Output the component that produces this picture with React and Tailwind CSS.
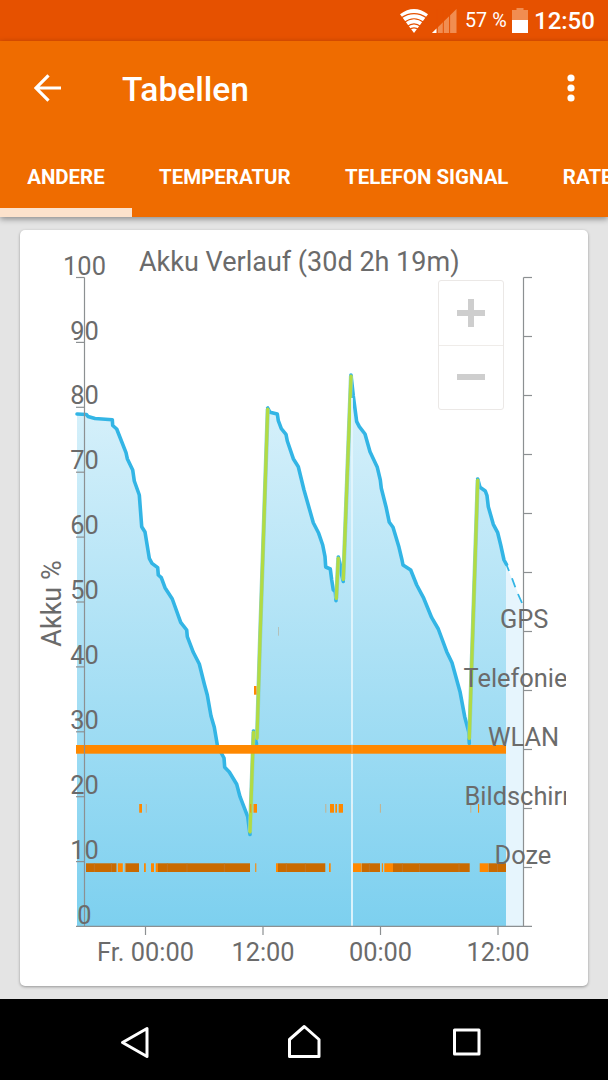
const tabs = ["ANDERE", "TEMPERATUR", "TELEFON SIGNAL", "RATE"];

const percentTicks = [0, 10, 20, 30, 40, 50, 60, 70, 80, 90, 100];
const rightTicks = [0, 1, 2, 3, 4, 5, 6, 7, 8, 9, 10, 11];

const timeTicks = [
  { label: "Fr. 00:00", x: 145.5 },
  { label: "12:00", x: 263 },
  { label: "00:00", x: 380.5 },
  { label: "12:00", x: 498 },
];

const rowLabels = [
  { label: "GPS", x: 500, y: 628 },
  { label: "Telefonie", x: 463.5, y: 687 },
  { label: "WLAN", x: 488, y: 746 },
  { label: "Bildschirm", x: 464.5, y: 805 },
  { label: "Doze", x: 494.5, y: 864 },
];

// battery level, split where the phone was plugged in
const discharge = [
  "77,414 86.5,414.5 88,416.5 95,418.5 112.3,419.7 112.7,425.5 116.7,429 126,452.7 127.3,458.7 132.7,470 134.3,481 139.3,495 141.7,526.7 145,532 149.3,558.3 152,563.3 157.7,567.7 158.3,575 161.3,577.7 165,587.7 172.3,599 180.7,622.3 186.7,630 187.3,636.7 193.3,652.3 199.3,664 204.3,684 207.3,695 211,716 214.3,727.3 217.5,746 224,758 224.7,767.3 229.3,772 236.7,784.3 240,796.7 247.7,816.7 250,834.5",
  "253.5,731 256.5,744",
  "267.7,408 270,412.3 277.3,414 278.3,420.7 281.3,428.7 286,434.3 287.3,441 293.3,458.7 298.3,466.7 304,490 313.3,522.7 318.7,533.3 322.7,545 325,556.7 325.7,567 330.3,569 331.7,580 333.3,590 335.3,591.7 336,600.7",
  "338.3,557 340.3,565 341.7,575 343.3,581.5",
  "351,375 353.3,396 356.7,421.7 359.3,426.7 365,434 370,451.7 377.3,467.3 380.3,480 381.3,488.3 386,506.7 389.3,522.3 393,527.3 399,547.3 402,560 403,565 410.7,570 416.7,585 423.3,597.3 431.7,617.7 438.3,629 446.7,651.7 452,662.7 460,691.7 464.7,716.7 468.7,731.7 469.3,743.5",
  "477.7,479 480,487.3 485.3,491 487,495.7 488.3,506.7 493.3,524.3 497.7,532.7 500.7,545 504,560 506.5,564.5",
];

const charging = [
  "250,832 253.5,732",
  "257,738.5 260,640 267.7,409",
  "336.3,598.5 338.3,558",
  "343.3,579.5 351,376",
  "469.3,738.5 477.7,480",
];

const dozeIdle = [
  [86, 116.5], [125.5, 139], [158, 250], [278, 325.3],
  [362, 380], [393, 469.7], [488.5, 506],
];

const dozeActive = [
  [117.8, 122.8], [124.8, 125.5], [144, 145.8], [151, 154], [155.7, 158],
  [255.2, 256.3], [276, 278], [329, 330.7], [353, 361.7], [381.8, 383],
  [384.3, 393], [479.7, 488.5],
];

const dozeSeams = [94.3, 111.5, 167.3, 187, 224.3, 286.3, 305.3, 369.3, 402.3, 419.5, 459, 497.5];

const screenOn = [
  [139.2, 142], [250.3, 251.2], [253.5, 257], [330, 334], [335.3, 337],
  [338.7, 343], [478, 479.1],
];

const screenFaint = [146.3, 325.8, 352.5, 380.4, 470.8];

const StatusBar = () => (
  <div className="flex h-[41px] items-center justify-end bg-[#e65100] pr-[14px] text-white">
    <svg width="28" height="24" viewBox="0 0 28 24">
      <path d="M0 5.2Q14 -5.2 28 5.2L14 24Z" fill="white" />
      <g fill="none" stroke="#e65100" strokeWidth="1.2">
        <path d="M1 9Q14 .3 27 9" />
        <path d="M4 13.5Q14 6 24 13.5" />
        <path d="M7 17.6Q14 12 21 17.6" />
        <path d="M9 20.8Q14 17 19 20.8" />
      </g>
    </svg>
    <svg className="ml-[4px]" width="25" height="24" viewBox="0 0 25 24">
      <path d="M0 24L24.5 0V24Z" fill="#f18d51" />
      <path d="M0 24L4.5 19.5V24Z" fill="white" />
      <path d="M5.3 0V24M11.3 0V24M17.6 0V24" stroke="#e65100" strokeWidth="1" />
    </svg>
    <span className="ml-[8px] w-[42px] whitespace-nowrap text-[19.8px] leading-none">57 %</span>
    <svg className="ml-[5px]" width="16" height="25" viewBox="0 0 16 25">
      <path d="M4.5 0h7v2H16v10H0V2h4.500Z" fill="#f18d51" />
      <path d="M0 12h16v13H0Z" fill="white" />
    </svg>
    <span className="ml-[6px] w-[60px] whitespace-nowrap pt-[1px] text-[24px] font-medium leading-none">12:50</span>
  </div>
);

const AppBar = () => (
  <header className="relative z-10 h-[176px] bg-[#ef6c00] text-white shadow-[0_2px_6px_rgba(0,0,0,0.4)]">
    <div className="flex h-[94px] items-center pl-[34px] pr-[33px]">
      <svg width="27" height="28" viewBox="0 0 27 28" fill="none" stroke="white" strokeWidth="3.2">
        <path d="M27 14H2.500M14.500 1.300L2 14L14.500 26.700" />
      </svg>
      <h1 className="ml-[61px] mt-[3px] flex-1 text-[33.6px] font-medium leading-none">Tabellen</h1>
      <svg width="8" height="28" viewBox="0 0 8 28" fill="white">
        <circle cx="4" cy="4" r="3.600" />
        <circle cx="4" cy="14" r="3.600" />
        <circle cx="4" cy="24" r="3.600" />
      </svg>
    </div>
    <nav className="flex h-[82px] overflow-hidden">
      {tabs.map((tab, i) => (
        <button
          key={tab}
          className={`flex shrink-0 items-center whitespace-nowrap border-b-[9px] px-[27.2px] pt-[11px] text-[20.45px] font-bold ${
            i === 0 ? "border-[#fce2cc]" : "border-transparent"
          }`}
        >
          {tab}
        </button>
      ))}
    </nav>
  </header>
);

const BatteryChart = () => (
  <svg className="block" width="568" height="756" viewBox="20 230 568 756" fontSize="25.4" fill="#6b6b6b">
    <defs>
      <linearGradient id="level" gradientUnits="userSpaceOnUse" x1="0" y1="375" x2="0" y2="926">
        <stop offset="0" stopColor="#dbf2fb" />
        <stop offset="1" stopColor="#7dd0ef" />
      </linearGradient>
      <clipPath id="labelArea">
        <rect x="20" y="230" width="546" height="756" />
      </clipPath>
    </defs>

    {/* Level */}
    <polygon points={`77,926 ${discharge.join(" ")} 506,926`} fill="url(#level)" />
    <polygon points="506,564.500 523,605 523,926 506,926" fill="#e6f5fd" />
    <g fill="none" stroke="#33b5e5" strokeWidth="3.600" strokeLinejoin="round" strokeLinecap="round">
      {discharge.map((points) => (
        <polyline key={points} points={points} />
      ))}
    </g>
    <path
      d="M507 566L509 571M512 578.300L515.300 587.300M518 594L522 603"
      stroke="#33b5e5"
      strokeWidth="1.800"
    />
    <g fill="none" stroke="#8fd3c8" strokeWidth="4.200">
      {charging.map((points) => (
        <polyline key={points} points={points} />
      ))}
    </g>
    <g fill="none" stroke="#b2db43" strokeWidth="3.200" strokeLinecap="round">
      {charging.map((points) => (
        <polyline key={points} points={points} />
      ))}
    </g>

    {/* Activity rows */}
    <rect x="278" y="627" width="0.800" height="8.700" fill="#b3b9ad" />
    <rect x="254" y="686" width="2.500" height="8.700" fill="#ff8800" />
    <rect x="76" y="745" width="430" height="8.700" fill="#ff8800" />
    {screenOn.map(([from, to]) => (
      <rect key={from} x={from} y="804" width={to - from} height="8.700" fill="#ff8800" />
    ))}
    {screenFaint.map((x) => (
      <rect key={x} x={x - 0.5} y="804" width="1" height="8.700" fill="#c6b18a" />
    ))}
    {dozeIdle.map(([from, to]) => (
      <rect key={from} x={from} y="863.300" width={to - from} height="8.700" fill="#c96a00" />
    ))}
    {dozeActive.map(([from, to]) => (
      <rect key={from} x={from} y="863.300" width={to - from} height="8.700" fill="#ff8800" />
    ))}
    {dozeSeams.map((x) => (
      <rect key={x} x={x - 0.4} y="863.300" width="0.800" height="8.700" fill="#c0782a" />
    ))}
    <path d="M352 398V744.500M352 754V926" stroke="#e4f5fc" strokeWidth="1.800" />
    <path d="M352 745V753.700" stroke="#ffa94a" strokeWidth="1" />

    {/* Axes */}
    <g stroke="#8c9092" strokeWidth="1.200">
      <path d="M84.500 277.500V926M523.500 277.500V926M76 926.300H532" />
      {percentTicks.slice(1).map((value) => (
        <path key={value} d={`M76 ${926.5 - value * 6.49}H84.500`} />
      ))}
      {rightTicks.slice(1).map((row) => (
        <path key={row} d={`M523.500 ${926.5 - row * 59}H532`} />
      ))}
      {timeTicks.map(({ x }) => (
        <path key={x} d={`M${x} 926.500V935`} />
      ))}
    </g>

    {/* Labels */}
    <text x="139" y="270.800" fontSize="27">Akku Verlauf (30d 2h 19m)</text>
    <text transform="translate(61 603.500) rotate(-90)" textAnchor="middle" fontSize="27">Akku %</text>
    {percentTicks.map((value) => (
      <text key={value} x="84.500" y={923.6 - value * 6.49} textAnchor="middle">
        {value}
      </text>
    ))}
    {timeTicks.map(({ label, x }) => (
      <text key={x} x={x} y="960.600" textAnchor="middle">
        {label}
      </text>
    ))}
    <g clipPath="url(#labelArea)">
      {rowLabels.map(({ label, x, y }) => (
        <text key={label} x={x} y={y}>
          {label}
        </text>
      ))}
    </g>
  </svg>
);

const ZoomControls = () => (
  <div className="absolute left-[418px] top-[50px] flex h-[130px] w-[66px] flex-col rounded-[3px] border border-[#ebe8e6] bg-white">
    <button className="flex flex-1 items-center justify-center border-b border-[#efece9]">
      <svg width="28" height="28" viewBox="0 0 28 28" stroke="#cecece" strokeWidth="6">
        <path d="M14 0V28M0 14H28" />
      </svg>
    </button>
    <button className="flex flex-1 items-center justify-center">
      <svg width="28" height="28" viewBox="0 0 28 28" stroke="#cecece" strokeWidth="6">
        <path d="M0 14H28" />
      </svg>
    </button>
  </div>
);

const NavigationBar = () => (
  <footer className="flex h-[81px] items-center bg-black pl-[120px] pt-[5px]">
    <svg width="30" height="34" viewBox="120 1025 30 34" fill="none" stroke="white" strokeWidth="3" strokeLinejoin="round">
      <path d="M122.500 1042.500L147 1028.500V1056.500Z" />
    </svg>
    <svg className="ml-[136px]" width="36" height="36" viewBox="286 1024 36 36" fill="none" stroke="white" strokeWidth="3" strokeLinejoin="round">
      <path d="M289.500 1056.500V1039.500L304.300 1026.500L319 1039.500V1056.500Z" />
    </svg>
    <svg className="ml-[128px]" width="32" height="32" viewBox="450 1026 32 32" fill="none" stroke="white" strokeWidth="3" strokeLinejoin="round">
      <path d="M454.500 1030H479V1054H454.500Z" />
    </svg>
  </footer>
);

const App = () => {
  return (
    <div className="flex h-[1080px] w-[608px] flex-col overflow-hidden bg-[#e4e4e4] font-[Roboto,sans-serif]">
      <StatusBar />
      <AppBar />
      <main className="flex-1 px-[20px] pt-[13px]">
        <section className="relative h-[756px] rounded-[5px] bg-white shadow-[0_1px_3px_rgba(0,0,0,0.35)]">
          <BatteryChart />
          <ZoomControls />
        </section>
      </main>
      <NavigationBar />
    </div>
  );
};

export default App;
